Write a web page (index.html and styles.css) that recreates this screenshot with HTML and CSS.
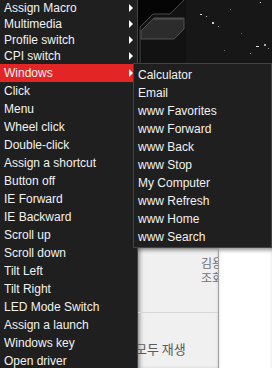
FILE: index.html
```html
<!DOCTYPE html>
<html lang="en">
<head>
    <meta charset="UTF-8">
    <meta name="viewport" content="width=device-width, initial-scale=1.0">
    <title>Button Assignment</title>
    <link rel="stylesheet" href="styles.css">
</head>
<body>
    <div class="screen">
        <ul class="menu">
            <li class="item sub">Assign Macro</li>
            <li class="item sub">Multimedia</li>
            <li class="item sub">Profile switch</li>
            <li class="item sub">CPI switch</li>
            <li class="item sub active">Windows</li>
            <li class="item">Click</li>
            <li class="item">Menu</li>
            <li class="item">Wheel click</li>
            <li class="item">Double-click</li>
            <li class="item">Assign a shortcut</li>
            <li class="item">Button off</li>
            <li class="item">IE Forward</li>
            <li class="item">IE Backward</li>
            <li class="item">Scroll up</li>
            <li class="item">Scroll down</li>
            <li class="item">Tilt Left</li>
            <li class="item">Tilt Right</li>
            <li class="item">LED Mode Switch</li>
            <li class="item">Assign a launch</li>
            <li class="item">Windows key</li>
            <li class="item">Open driver</li>
        </ul>

        <div class="stage">
            <div class="banner">
                <svg width="134" height="248" viewBox="0 0 134 248">
                    <rect width="134" height="248" fill="#121212"/>
                    <rect x="48" y="0" width="86" height="70" fill="#171717"/>
                    <polygon points="0,0 46,0 32,14 15,14 2,27 2,248 0,248" fill="#050505"/>
                    <polyline points="46,0 32,14 15,14 2,27 2,70" fill="none" stroke="#484848"/>
                    <polygon points="16,18 46,18 46,29 36,39 3,39 3,31" fill="#2c2c2c" stroke="#505050"/>
                    <line x1="16" y1="19" x2="45" y2="19" stroke="#5c5c5c"/>
                    <rect x="62" y="14" width="2" height="1" fill="#ddd"/>
                    <rect x="68" y="16" width="1" height="1" fill="#bbb"/>
                    <rect x="74" y="22" width="2" height="2" fill="#ccc"/>
                    <rect x="80" y="26" width="1" height="1" fill="#888"/>
                    <rect x="122" y="2" width="1" height="1" fill="#eee"/>
                    <rect x="92" y="9" width="1" height="1" fill="#777"/>
                    <rect x="103" y="33" width="1" height="1" fill="#666"/>
                    <rect x="118" y="46" width="3" height="1" fill="#ddd"/>
                    <rect x="126" y="44" width="2" height="2" fill="#aaa"/>
                    <rect x="130" y="48" width="1" height="1" fill="#999"/>
                    <rect x="112" y="53" width="1" height="1" fill="#888"/>
                    <rect x="86" y="50" width="1" height="1" fill="#666"/>
                </svg>
            </div>
            <div class="panel">
                <div class="list">
                    <div class="info"><span>김용</span></div>
                    <div class="info"><span>조회</span></div>
                    <div class="rule"></div>
                    <div class="play">모두 재생</div>
                </div>
                <div class="blank"></div>
            </div>
        </div>

        <ul class="submenu">
            <li class="item">Calculator</li>
            <li class="item">Email</li>
            <li class="item">www Favorites</li>
            <li class="item">www Forward</li>
            <li class="item">www Back</li>
            <li class="item">www Stop</li>
            <li class="item">My Computer</li>
            <li class="item">www Refresh</li>
            <li class="item">www Home</li>
            <li class="item">www Search</li>
        </ul>
    </div>
</body>
</html>
```

FILE: styles.css
```css
body {
    margin: 0;
    background: #1f1f1f;
    font-family: 'Liberation Sans', Arial, sans-serif;
    font-size: 12px;
    overflow: hidden;
}
.screen {
    position: relative;
    display: flex;
    height: 368px;
}
.menu {
    flex: none;
    width: 137px;
    margin: 0;
    padding: 0;
    list-style: none;
    background: #1f1f1f;
    border-right: 1px solid #e00000;
    overflow: hidden;
}
.item {
    position: relative;
    height: 18px;
    line-height: 18px;
    padding-left: 4px;
    color: #f2f2f2;
    white-space: nowrap;
}
.item.sub {
    height: 16px;
    line-height: 16px;
}
.item.sub::after {
    content: '';
    position: absolute;
    right: 4px;
    top: 50%;
    margin-top: -4px;
    border-left: 4px solid #fff;
    border-top: 4px solid transparent;
    border-bottom: 4px solid transparent;
}
.item.active {
    height: 18px;
    line-height: 18px;
    background: #e42526;
}
.stage {
    flex: 1;
    display: flex;
    flex-direction: column;
}
.banner {
    flex: none;
    height: 248px;
    overflow: hidden;
}
.banner svg {
    display: block;
}
.panel {
    flex: 1;
    display: flex;
}
.list {
    width: 80px;
    background: #f0f0f0;
    border-right: 1px solid #a0a0a0;
    overflow: hidden;
    padding-top: 7px;
    box-shadow: inset 4px 0 4px -2px rgba(0, 0, 0, 0.35), inset 0 4px 4px -2px rgba(0, 0, 0, 0.45);
    font-family: 'Noto Sans CJK KR', sans-serif;
    font-size: 12px;
    color: #707070;
}
.info {
    display: flex;
    justify-content: flex-end;
    height: 15px;
    line-height: 15px;
}
.info span {
    margin-right: -5px;
}
.rule {
    margin-top: 27px;
    border-top: 1px solid #d6d6d6;
}
.play {
    margin: 28px 0 0 -3px;
    line-height: 16px;
    font-size: 13px;
    white-space: nowrap;
    color: #5a5a5a;
}
.blank {
    flex: 1;
    background: #fff;
    box-shadow: inset 0 4px 4px -2px rgba(0, 0, 0, 0.45);
}
.submenu {
    position: absolute;
    left: 133px;
    top: 63px;
    width: 137px;
    height: 180px;
    margin: 0;
    padding: 2px 0 1px;
    list-style: none;
    background: #1f1f1f;
    border: 1px solid #e00000;
}
```
